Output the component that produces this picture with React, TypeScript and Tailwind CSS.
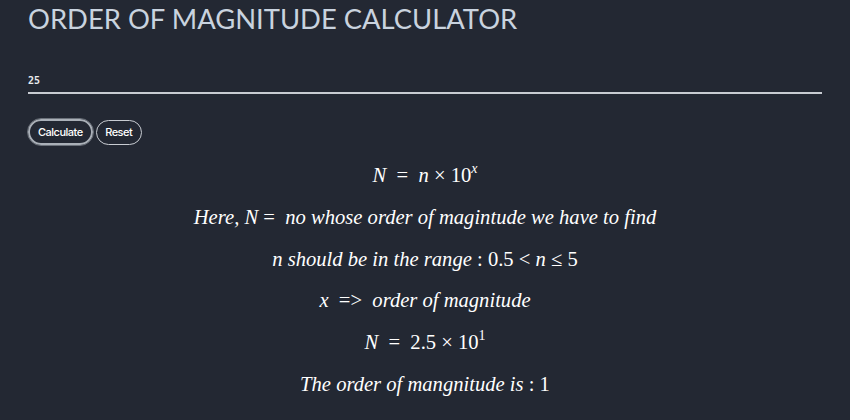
import React from "react";

const I = ({ children }: { children: React.ReactNode }) => (
  <span className="italic">{children}</span>
);
const R = ({ children }: { children: React.ReactNode }) => (
  <span className="not-italic">{children}</span>
);

export default function App() {
  return (
    <div className="w-[850px] h-[420px] bg-[#232833] overflow-hidden text-white">
      <div className="px-[28px]">
        <h1
          className="pt-[3px] text-[27.4px] leading-[32px] text-[#c9d3df]"
          style={{ fontFamily: "Lato, 'Open Sans', sans-serif" }}
        >
          ORDER OF MAGNITUDE CALCULATOR
        </h1>
        <div className="mt-[40px] border-b-2 border-[#c8ccd2] pb-[5px]">
          <div
            className="text-[10px] leading-[12px] font-bold text-[#e8eaee]"
            style={{ fontFamily: "'DejaVu Sans Mono', monospace" }}
          >
            25
          </div>
        </div>
        <div
          className="mt-[25px] flex gap-[3px] items-center"
          style={{ fontFamily: "Inter, 'Noto Sans', sans-serif" }}
        >
          <button className="h-[26px] px-[8px] rounded-full border-2 border-[#aab0b8] outline outline-1 outline-[#6b717a] text-[11px] font-medium tracking-[-0.5px] text-white bg-[#232833]">
            Calculate
          </button>
          <button className="h-[25px] px-[8.5px] rounded-full border border-[#c8ccd2] text-[11px] font-medium tracking-[-0.5px] text-white bg-[#232833]">
            Reset
          </button>
        </div>
      </div>
      <div
        className="mt-[10px] flex flex-col items-center text-[20.6px] leading-[41.8px] text-white"
        style={{ fontFamily: "'Liberation Serif', serif" }}
      >
        <div>
          <I>N</I>
          <R>&nbsp;&nbsp;=&nbsp;&nbsp;</R>
          <I>n</I>
          <R> × 10</R>
          <sup className="italic text-[14px] -top-[9px]">x</sup>
        </div>
        <div className="italic">
          Here,&nbsp;N<R>&nbsp;=</R>&nbsp;&nbsp;no whose order of magintude we have to find
        </div>
        <div className="italic">
          n should be in the range <R>: 0.5 &lt; </R>n<R> ≤ 5</R>
        </div>
        <div className="italic">
          x&nbsp;&nbsp;<R>=&gt;</R>&nbsp;&nbsp;order of magnitude
        </div>
        <div>
          <I>N</I>
          <R>&nbsp;&nbsp;=&nbsp;&nbsp;2.5 × 10</R>
          <sup className="text-[14px] -top-[9px]">1</sup>
        </div>
        <div className="italic">
          The order of mangnitude is <R>: 1</R>
        </div>
      </div>
    </div>
  );
}
